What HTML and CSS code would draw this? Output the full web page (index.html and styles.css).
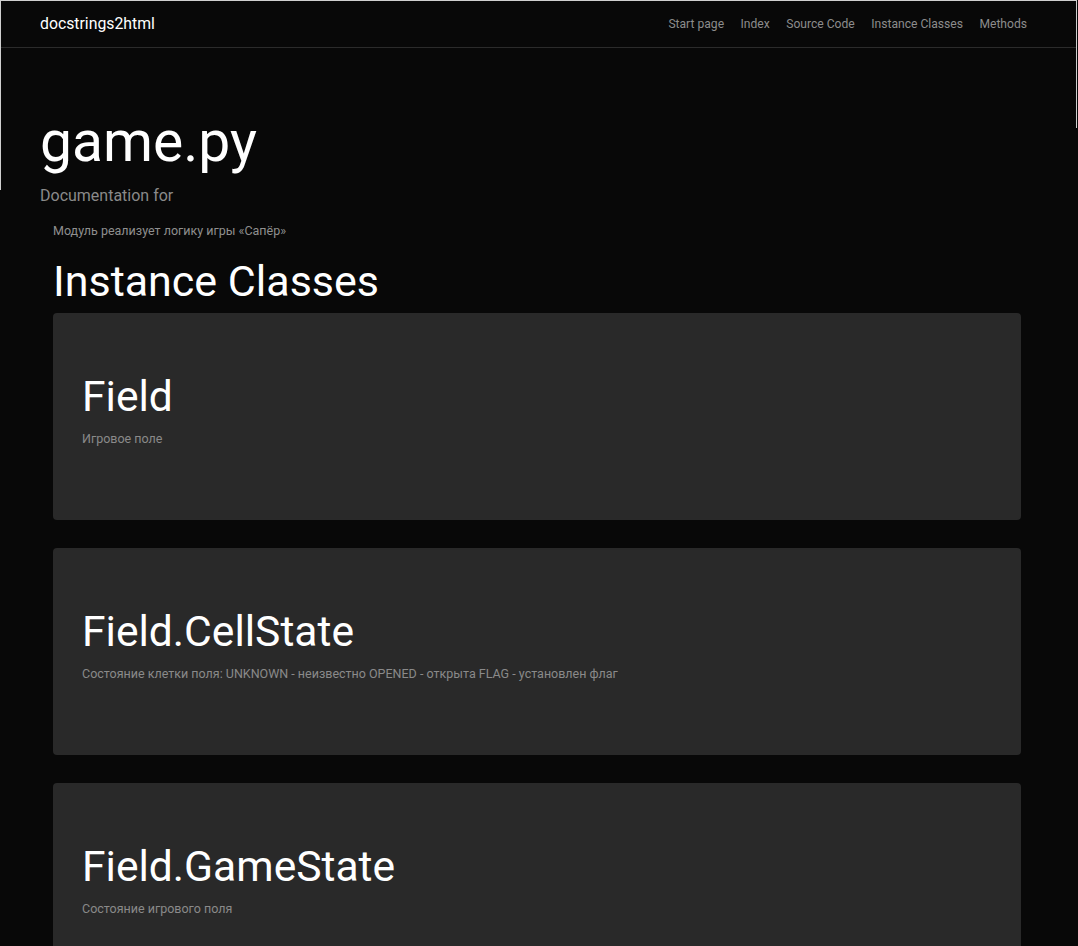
FILE: index.html
```html
<!DOCTYPE html>
<html lang="ru">
<head>
<meta charset="utf-8">
<title>game.py</title>
<link rel="stylesheet" href="styles.css">
</head>
<body>
<header class="top">
  <nav class="navbar">
    <a class="brand" href="#">docstrings2html</a>
    <ul class="nav-links">
      <li><a href="#">Start page</a></li>
      <li><a href="#">Index</a></li>
      <li><a href="#">Source Code</a></li>
      <li><a href="#">Instance Classes</a></li>
      <li><a href="#">Methods</a></li>
    </ul>
  </nav>
  <div class="hero">
    <h1 class="title">game.py</h1>
    <p class="lead">Documentation for</p>
  </div>
</header>
<main class="content">
  <p class="module-doc">Модуль реализует логику игры «Сапёр»</p>
  <h2 class="section-title">Instance Classes</h2>
  <section class="card">
    <h3 class="card-title">Field</h3>
    <p class="card-text">Игровое поле</p>
  </section>
  <section class="card">
    <h3 class="card-title">Field.CellState</h3>
    <p class="card-text">Состояние клетки поля: UNKNOWN - неизвестно OPENED - открыта FLAG - установлен флаг</p>
  </section>
  <section class="card">
    <h3 class="card-title">Field.GameState</h3>
    <p class="card-text">Состояние игрового поля</p>
  </section>
</main>
</body>
</html>
```

FILE: styles.css
```css
html, body {
  margin: 0;
  padding: 0;
  background: #080808;
}
body {
  font-family: Roboto, "Noto Sans", "Liberation Sans", sans-serif;
  color: #fff;
}
a { text-decoration: none; }

.top {
  position: relative;
  width: 1076px;
  height: 190px;
  border-top: 1px solid #cfcfcf;
  border-left: 1px solid #cfcfcf;
  box-sizing: border-box;
}
.top::after {
  content: "";
  position: absolute;
  right: -1px;
  top: -1px;
  width: 1px;
  height: 128px;
  background: #cfcfcf;
}

.navbar {
  display: flex;
  align-items: center;
  justify-content: space-between;
  height: 47px;
  box-sizing: border-box;
  padding: 0 50px 1px 39px;
  border-bottom: 1px solid #2b2b2b;
  margin-right: -1px;
}
.brand {
  color: #fff;
  font-size: 15.8px;
}
.nav-links {
  display: flex;
  gap: 16.5px;
  list-style: none;
  margin: 0 0 2px;
  padding: 0;
}
.nav-links a {
  color: #8c8c8c;
  font-size: 12.1px;
}

.hero {
  padding: 60px 0 0 39px;
}
.title {
  margin: 0;
  font-size: 57px;
  font-weight: 400;
  line-height: 68px;
}
.lead {
  margin: 8px 0 0;
  font-size: 16px;
  line-height: 24px;
  color: #8a8a8a;
}

.content {
  padding: 0 57px 40px 53px;
}
.module-doc {
  margin: 32px 0 0;
  font-size: 12.5px;
  line-height: 18px;
  color: #8f8f8f;
}
.section-title {
  margin: 15px 0 6px;
  font-size: 43px;
  font-weight: 400;
  line-height: 52px;
}
.card {
  background: #292929;
  border-radius: 4px;
  height: 207px;
  box-sizing: border-box;
  padding: 58px 29px 0;
  margin-bottom: 28px;
}
.card-title {
  margin: 0 0 8px;
  font-size: 42.6px;
  font-weight: 400;
  line-height: 51px;
}
.card-text {
  margin: 0;
  font-size: 12.5px;
  line-height: 18px;
  color: #8a8a8a;
}
```
